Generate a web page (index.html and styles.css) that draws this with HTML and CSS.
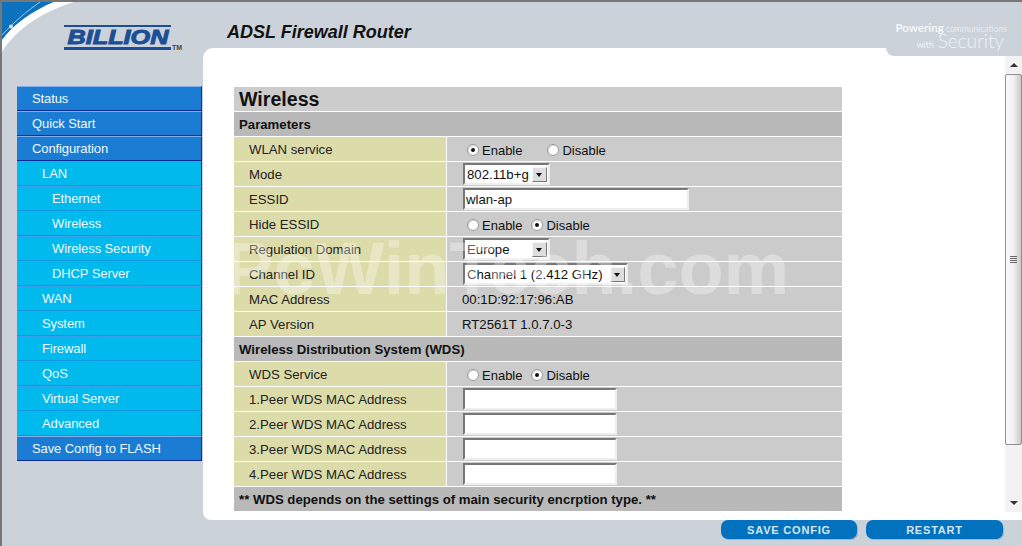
FILE: index.html
```html
<!DOCTYPE html>
<html lang="en">
<head>
<meta charset="utf-8">
<title>ADSL Firewall Router</title>
<link rel="stylesheet" href="styles.css">
</head>
<body>
<div class="page">
  <header class="top">
    <svg class="swoop" width="76" height="54" viewBox="0 0 76 54" aria-hidden="true">
      <path d="M0 0H52C30 9 11 23 0 38Z" fill="#0d72bd"/>
      <path d="M0 38C11 23 30 9 52 0H72C42 9 15 26 0 50Z" fill="#fff"/>
      <path d="M0 33C12 20 25 9 38 0" stroke="#9cc7e8" fill="none"/>
      <circle cx="9" cy="24.500" r="2" fill="#cfe6f5"/>
    </svg>
    <div class="brand">
      <span class="brand-name">BILLION</span>
      <span class="brand-tm">TM</span>
    </div>
    <h1 class="product">ADSL Firewall Router</h1>
    <div class="tagline">
      <div class="tag-line1"><b>Powering</b> communications</div>
      <div class="tag-line2"><span class="tag-with">with</span> <span class="tag-sec">Security</span></div>
    </div>
  </header>

  <div class="middle">
    <nav class="nav">
      <a class="nav-item">Status</a>
      <a class="nav-item">Quick Start</a>
      <a class="nav-item">Configuration</a>
      <a class="nav-item sub">LAN</a>
      <a class="nav-item sub2">Ethernet</a>
      <a class="nav-item sub2">Wireless</a>
      <a class="nav-item sub2">Wireless Security</a>
      <a class="nav-item sub2">DHCP Server</a>
      <a class="nav-item sub">WAN</a>
      <a class="nav-item sub">System</a>
      <a class="nav-item sub">Firewall</a>
      <a class="nav-item sub">QoS</a>
      <a class="nav-item sub">Virtual Server</a>
      <a class="nav-item sub">Advanced</a>
      <a class="nav-item">Save Config to FLASH</a>
    </nav>

    <main class="panel">
      <div class="form">
        <div class="title wide">Wireless</div>
        <div class="section wide">Parameters</div>

        <div class="label">WLAN service</div>
        <div class="value radios">
          <label class="radio r-wide"><input type="radio" name="wlan" checked>Enable</label>
          <label class="radio"><input type="radio" name="wlan">Disable</label>
        </div>

        <div class="label">Mode</div>
        <div class="value"><span class="sel s-mode"><select><option>802.11b+g</option></select><i class="arrow"></i></span></div>

        <div class="label">ESSID</div>
        <div class="value"><input class="field f-essid" type="text" value="wlan-ap"></div>

        <div class="label">Hide ESSID</div>
        <div class="value radios">
          <label class="radio"><input type="radio" name="hide">Enable</label>
          <label class="radio"><input type="radio" name="hide" checked>Disable</label>
        </div>

        <div class="label">Regulation Domain</div>
        <div class="value"><span class="sel s-reg"><select><option>Europe</option></select><i class="arrow"></i></span></div>

        <div class="label">Channel ID</div>
        <div class="value"><span class="sel s-chan"><select><option>Channel 1 (2.412 GHz)</option></select><i class="arrow"></i></span></div>

        <div class="label">MAC Address</div>
        <div class="value text">00:1D:92:17:96:AB</div>

        <div class="label">AP Version</div>
        <div class="value text">RT2561T 1.0.7.0-3</div>

        <div class="section wide">Wireless Distribution System (WDS)</div>

        <div class="label">WDS Service</div>
        <div class="value radios">
          <label class="radio"><input type="radio" name="wds">Enable</label>
          <label class="radio"><input type="radio" name="wds" checked>Disable</label>
        </div>

        <div class="label">1.Peer WDS MAC Address</div>
        <div class="value"><input class="field f-mac" type="text"></div>
        <div class="label">2.Peer WDS MAC Address</div>
        <div class="value"><input class="field f-mac" type="text"></div>
        <div class="label">3.Peer WDS MAC Address</div>
        <div class="value"><input class="field f-mac" type="text"></div>
        <div class="label">4.Peer WDS MAC Address</div>
        <div class="value"><input class="field f-mac" type="text"></div>

        <div class="section wide note">** WDS depends on the settings of main security encrption type. **</div>
      </div>

      <div class="scrollbar" aria-hidden="true">
        <div class="sb-btn"><i class="sb-up"></i></div>
        <div class="sb-track">
          <div class="sb-thumb"><i class="sb-grip"></i></div>
        </div>
        <div class="sb-btn"><i class="sb-down"></i></div>
      </div>
    </main>
  </div>

  <footer class="bottom">
    <button class="action a-save">SAVE CONFIG</button>
    <button class="action a-restart">RESTART</button>
  </footer>

  <div class="watermark" aria-hidden="true">PcWinTech.com</div>
</div>
</body>
</html>
```

FILE: styles.css
```css
* { box-sizing: border-box; }
html, body { margin: 0; padding: 0; height: 100%; overflow: hidden; }
body { background: #cbd2da; font-family: "Liberation Sans", Arial, sans-serif; font-size: 13.2px; color: #111; }

.page {
  position: relative;
  width: 1022px;
  height: 546px;
  display: flex;
  flex-direction: column;
  border-top: 2px solid #777;
  border-left: 2px solid #777;
  overflow: hidden;
}

/* header */
.top { position: relative; z-index: 2; height: 46px; flex: none; }
.swoop { position: absolute; left: 0; top: 0; }
.brand {
  position: absolute;
  left: 62px;
  top: 23px;
  width: 107px;
  height: 25px;
  border-top: 2px solid #1d4f94;
  border-bottom: 3px solid #1d4f94;
  display: flex;
  align-items: center;
  justify-content: center;
}
.brand-name {
  font-weight: bold;
  font-style: italic;
  font-size: 20px;
  line-height: 20px;
  color: #1d4f94;
  transform: scaleX(1.26);
  -webkit-text-stroke: 1px #1d4f94;
}
.brand-tm { position: absolute; left: 108px; top: 17px; font-size: 7px; font-weight: bold; color: #444; }
.product {
  position: absolute;
  left: 225px;
  top: 19px;
  margin: 0;
  font-size: 18px;
  line-height: 22px;
  font-weight: bold;
  font-style: italic;
  color: #111;
}
.tagline { position: absolute; right: 15px; top: 20px; width: 125px; text-align: right; color: #eef2f5; line-height: 1; }
.tag-line1 { font-size: 8.5px; color: #e6ebef; font-family: "Lato", sans-serif; white-space: nowrap; }
.tag-line1 b { font-size: 11.5px; color: #f4f6f8; }
.tag-line2 { margin-top: -3px; margin-right: 3px; white-space: nowrap; }
.tag-with { font-size: 9px; font-family: "Lato", sans-serif; }
.tag-sec { font-size: 19px; font-family: "Lato", sans-serif; font-weight: 300; }

/* layout */
.middle { flex: none; height: 472px; display: flex; align-items: flex-start; }
.nav {
  flex: none;
  width: 185px;
  margin: 38px 0 0 15px;
  display: flex;
  flex-direction: column;
  font-size: 13px;
  letter-spacing: -0.1px;
}
.nav-item {
  display: flex;
  align-items: center;
  height: 25px;
  padding-left: 15px;
  padding-bottom: 1px;
  background: #1a7dd3;
  color: #f2f8fd;
  border-top: 1px solid #85acec;
  border-bottom: 1px solid #0f2a96;
  border-right: 1px solid #0f2a96;
}
.nav-item.sub { background: #00baee; border-top-color: #3aa0ee; border-bottom-color: #1295e0; padding-left: 25px; }
.nav-item.sub2 { background: #00baee; border-top-color: #3aa0ee; border-bottom-color: #1295e0; padding-left: 35px; }

.panel {
  position: relative;
  flex: none;
  width: 819px;
  height: 472px;
  margin-left: 1px;
  background: #fff;
  border-radius: 10px 0 0 8px;
  padding: 39px 0 0 31px;
}
.panel::before {
  content: "";
  position: absolute;
  right: 0;
  top: 0;
  width: 136px;
  height: 8px;
  background: #cbd2da;
  border-bottom-left-radius: 8px;
}

/* form */
.form {
  display: grid;
  width: 608px;
  grid-template-columns: 212px 395px;
  grid-auto-rows: 24px;
  gap: 1px;
}
.wide { grid-column: 1 / -1; }
.title { background: #cccccd; font-size: 19.6px; font-weight: bold; line-height: 25px; padding-left: 5px; color: #111; }
.section { background: #b9b9b9; font-weight: bold; line-height: 25px; padding-left: 5px; color: #111; }
.label { background: #dcdbaa; line-height: 25px; padding-left: 15px; color: #222; }
.value { background: #cbcbcb; display: flex; align-items: center; padding-left: 16px; }
.value.text { padding-left: 15px; padding-top: 1px; }
.radios { padding-left: 20px; padding-top: 2px; font-size: 13px; }
.radio { display: inline-flex; align-items: center; margin-right: 9px; }
.radio.r-wide { margin-right: 25px; }
.radio input {
  appearance: none;
  width: 12px;
  height: 12px;
  margin: 0 3px 0 0;
  border-radius: 50%;
  background: #fff;
  border: 1px solid #9a9a9a;
  box-shadow: inset 1px 1px 0 #dcdcdc;
  display: inline-grid;
  place-content: center;
}
.radio input:checked::after { content: ""; width: 4px; height: 4px; border-radius: 50%; background: #111; }

.sel {
  display: inline-flex;
  align-items: center;
  height: 22px;
  background: #fff;
  border: 2px solid;
  border-color: #777 #eee #eee #777;
}
.sel select {
  appearance: none;
  flex: 1;
  min-width: 0;
  border: 0;
  padding: 0 0 0 2px;
  background: transparent;
  font: 13.2px "Liberation Sans", Arial, sans-serif;
  color: #111;
  height: 18px;
}
.s-mode { width: 87px; }
.s-reg { width: 87px; }
.s-chan { width: 165px; }
.arrow {
  flex: none;
  position: relative;
  width: 15px;
  height: 15px;
  margin-right: 1px;
  background: #dedede;
  border: 1px solid;
  border-color: #f6f6f6 #777 #777 #f6f6f6;
}
.arrow::after {
  content: "";
  position: absolute;
  left: 3px;
  top: 5px;
  border: 3.5px solid transparent;
  border-top: 4px solid #111;
  border-bottom-width: 0;
}
.field {
  height: 22px;
  border: 2px solid;
  border-color: #777 #eee #eee #777;
  background: #fff;
  padding: 0 0 0 1px;
  font: 13.2px "Liberation Sans", Arial, sans-serif;
  color: #111;
}
.f-essid { width: 226px; }
.f-mac { width: 154px; }

/* scrollbar */
.scrollbar {
  position: absolute;
  right: 0;
  top: 8px;
  width: 17px;
  height: 456px;
  background: #f2f2f2;
  display: flex;
  flex-direction: column;
}
.sb-btn { flex: none; height: 18px; display: grid; place-content: center; }
.sb-up { width: 0; height: 0; border: 4px solid transparent; border-bottom-color: #333; border-top-width: 0; }
.sb-down { width: 0; height: 0; border: 4px solid transparent; border-top-color: #333; border-bottom-width: 0; }
.sb-track { flex: 1; }
.sb-thumb {
  height: 371px;
  border: 1px solid #8f8f8f;
  border-radius: 2px;
  background: linear-gradient(to right, #fbfbfb, #f0f0f0 50%, #c9c9c9);
  display: grid;
  place-content: center;
}
.sb-grip { width: 7px; height: 7px; background: repeating-linear-gradient(to bottom, #666 0 1px, transparent 1px 2px); }

/* footer */
.bottom { position: relative; flex: none; height: 26px; }
.action {
  position: absolute;
  top: 0;
  height: 19px;
  border: 0;
  border-radius: 7px;
  background: #0272bf;
  color: #d4e6f4;
  font: bold 11px "Liberation Sans", Arial, sans-serif;
  letter-spacing: 0.8px;
  padding: 0;
  box-shadow: 1px 1px 0 #a9b2b9;
}
.a-save { left: 719px; width: 136px; }
.a-restart { left: 864px; width: 137px; }

.watermark {
  position: absolute;
  z-index: 3;
  left: 222px;
  top: 224px;
  font-size: 74px;
  line-height: 86px;
  font-weight: bold;
  color: rgba(255,255,255,0.33);
  white-space: nowrap;
  pointer-events: none;
}
```
